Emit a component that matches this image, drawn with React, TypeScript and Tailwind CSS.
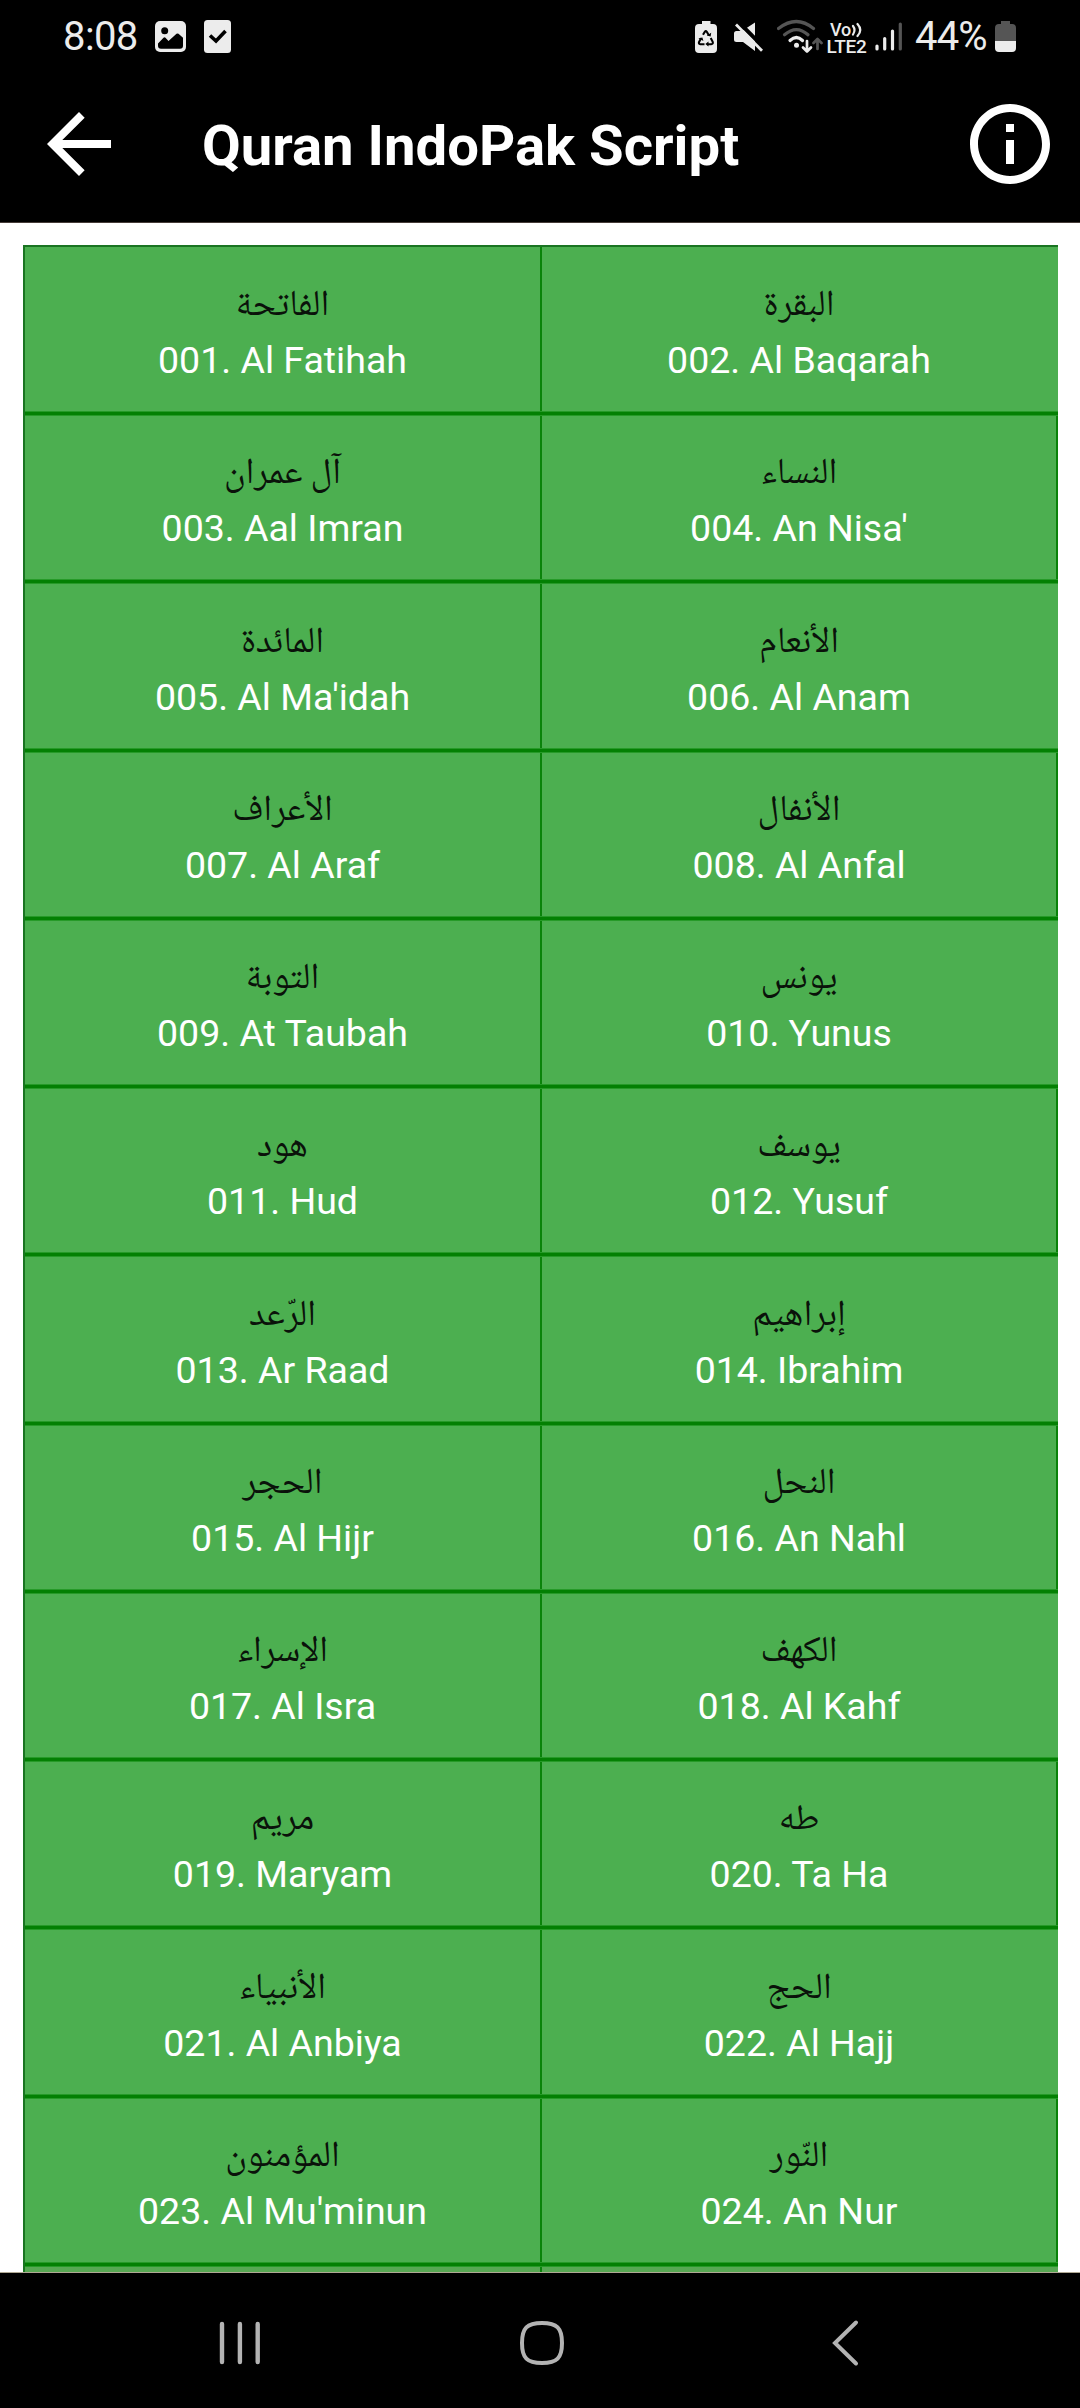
import React from "react";

const surahs: [string, string][] = [
  ["الفاتحة", "001. Al Fatihah"],
  ["البقرة", "002. Al Baqarah"],
  ["آل عمران", "003. Aal Imran"],
  ["النساء", "004. An Nisa'"],
  ["المائدة", "005. Al Ma'idah"],
  ["الأنعام", "006. Al Anam"],
  ["الأعراف", "007. Al Araf"],
  ["الأنفال", "008. Al Anfal"],
  ["التوبة", "009. At Taubah"],
  ["يونس", "010. Yunus"],
  ["هود", "011. Hud"],
  ["يوسف", "012. Yusuf"],
  ["الرّعد", "013. Ar Raad"],
  ["إبراهيم", "014. Ibrahim"],
  ["الحجر", "015. Al Hijr"],
  ["النحل", "016. An Nahl"],
  ["الإسراء", "017. Al Isra"],
  ["الكهف", "018. Al Kahf"],
  ["مريم", "019. Maryam"],
  ["طه", "020. Ta Ha"],
  ["الأنبياء", "021. Al Anbiya"],
  ["الحج", "022. Al Hajj"],
  ["المؤمنون", "023. Al Mu'minun"],
  ["النّور", "024. An Nur"],
];

const rows = Array.from({ length: 12 }, (_, i) => [surahs[2 * i], surahs[2 * i + 1]]);

function StatusBar() {
  return (
    <div className="flex h-[74px] w-full shrink-0 items-start pl-[63px] pr-[64px] text-[#ececec]">
      <span className="mt-[13px] w-[92px] whitespace-nowrap text-[40px] leading-[47px] tracking-[-0.6px]">8:08</span>
      <svg className="mt-5 h-[33px] w-[31px]" viewBox="0 0 31 33">
        <rect y="1" width="31" height="31" rx="5" fill="#ececec" />
        <circle cx="9.7" cy="10.7" r="3.5" fill="#000" />
        <path d="M3 23.5 8.5 17.8q1-1 2 0l3 3.2 8-7.2q1-.8 2 0l4.500 4v8q0 3-3 3H6q-3 0-3-3Z" fill="#000" />
      </svg>
      <svg className="ml-[18px] mt-5 h-[33px] w-[27px]" viewBox="0 0 27 33">
        <rect width="27" height="33" rx="3.500" fill="#ececec" />
        <path d="m6 15.500 6 5.500 9.500-10" fill="none" stroke="#000" strokeWidth="3.600" />
      </svg>
      <div className="ml-auto flex items-start">
        <svg className="mt-5 h-[34px] w-[22px]" viewBox="0 0 22 34">
          <path d="M7 1h8.500v3H18q4 0 4 4v21q0 4-4 4H4q-4 0-4-4V8q0-4 4-4h3Z" fill="#ececec" />
          <g fill="none" stroke="#000" strokeWidth="2.100">
            <path d="m8 14.800 1.800-3q1-1.300 2 0l2 3.400" />
            <path d="m15.700 18 2 3.800q.7 2.200-1.500 2.400h-3.700" />
            <path d="M9.500 24.200H5.300q-2-.2-1.200-2.200l2-3.800" />
          </g>
          <path d="m11.800 15.500 3.800 1 .6-3.800ZM13.500 21.500v5l-3.200-2.500ZM3.400 18.300l4-.9 1 3.600Z" fill="#000" />
        </svg>
        <svg className="ml-[17px] mt-5 h-[34px] w-[30px]" viewBox="0 0 30 34">
          <path d="M0 13.500q0-2.500 2.500-2.500H8L21 2.500v28.500L9 22H2.500Q0 22 0 19.500Z" fill="#ececec" />
          <path d="M3.500 1 31 28.700" stroke="#000" strokeWidth="4" />
          <path d="M2 4.500 28 30.700" stroke="#ececec" strokeWidth="2.800" />
        </svg>
        <svg className="ml-[13px] mt-4 h-[38px] w-[46px]" viewBox="0 0 46 38">
          <g fill="none" strokeLinecap="round" strokeWidth="3.200">
            <path d="M1.500 12.500Q19.500-1.500 36.500 12.500" stroke="#555" />
            <path d="M7.500 18.800Q19.500 8.500 31 18.800" stroke="#555" />
            <path d="M13 24.500Q19.500 18.500 25.500 24.500" stroke="#ececec" />
          </g>
          <circle cx="19.500" cy="29.300" r="2.500" fill="#ececec" />
          <path d="M30 25v10.500m-4-4 4 4 4-4" fill="none" stroke="#ececec" strokeWidth="2.700" strokeLinecap="round" strokeLinejoin="round" />
          <path d="M40.500 33V23m-4 4 4-4 4 4" fill="none" stroke="#555" strokeWidth="2.700" strokeLinecap="round" strokeLinejoin="round" />
        </svg>
        <div className="ml-[3px] mt-[21px] flex w-[41px] flex-col items-center font-medium">
          <span className="flex items-center">
            <span className="whitespace-nowrap text-[18px] leading-[17px] tracking-[-0.3px]">Vo</span>
            <svg className="h-[17px] w-[12px]" viewBox="0 0 12 17" fill="none" stroke="#ececec" strokeWidth="2.200" strokeLinecap="round">
              <path d="M2 5q3 4 0 8.500M6.500 3q5.500 6 0 12" />
            </svg>
          </span>
          <span className="whitespace-nowrap text-[19px] leading-[18px] tracking-[-0.3px]">LTE2</span>
        </div>
        <svg className="ml-2 mt-5 h-[34px] w-[28px]" viewBox="0 0 28 34" strokeWidth="3.200" strokeLinecap="round">
          <path d="M2 26v3M9.700 18.500V29M17.500 11V29" stroke="#ececec" />
          <path d="M25.300 4v25" stroke="#555" />
        </svg>
        <span className="ml-[12px] mt-[13px] w-[72px] whitespace-nowrap text-[40px] leading-[47px] tracking-[-0.8px]">44%</span>
        <svg className="ml-2 mt-5 h-[34px] w-[21px]" viewBox="0 0 21 34">
          <path d="M6 1h9v3h2q4 0 4 4v13H0V8q0-4 4-4h2Z" fill="#555" />
          <path d="M0 21h21v7q0 4-4 4H4q-4 0-4-4Z" fill="#ececec" />
        </svg>
      </div>
    </div>
  );
}

function AppBar() {
  return (
    <div className="flex w-full flex-1 items-center pl-[31px] pr-[22px] pb-[9px]">
      <svg className="h-24 w-24" viewBox="0 0 24 24" fill="#fff">
        <path d="M20 11H7.830l5.590-5.590L12 4l-8 8 8 8 1.410-1.410L7.830 13H20v-2z" />
      </svg>
      <h1 className="ml-[75px] whitespace-nowrap pt-1 text-[56.25px] font-bold leading-[66px] text-white">Quran IndoPak Script</h1>
      <svg className="ml-auto h-24 w-24" viewBox="0 0 24 24" fill="#fff">
        <path d="M11 7h2v2h-2zm0 4h2v6h-2zm1-9C6.480 2 2 6.480 2 12s4.480 10 10 10 10-4.480 10-10S17.520 2 12 2zm0 18c-4.410 0-8-3.590-8-8s3.590-8 8-8 8 3.590 8 8-3.590 8-8 8z" />
      </svg>
    </div>
  );
}

function Cell({ arabic, name, right }: { arabic: string; name: string; right?: boolean }) {
  return (
    <div
      className={
        "flex flex-col items-center justify-end pb-[27px] " +
        (right ? "flex-1" : "w-[517px] shrink-0 border-r-2 border-[#0a830a]")
      }
    >
      <span dir="rtl" lang="ar" className="whitespace-nowrap font-['Noto_Naskh_Arabic','Noto_Sans_Arabic','DejaVu_Sans',sans-serif] text-[36.6px] leading-[58px] text-[#0a120a]">{arabic}</span>
      <span className="whitespace-nowrap text-[37.5px] leading-[48px] text-white">{name}</span>
    </div>
  );
}

function RowLine() {
  return <div className="h-[5px] shrink-0 border-y border-[#269a28] bg-[#038003]" />;
}

function NavBar() {
  return (
    <div className="flex h-[135px] w-full shrink-0 items-start bg-black pl-[218px]">
      <svg className="mt-[47px] h-[46px] w-[44px]" viewBox="0 0 44 46" stroke="#b3b3b3" strokeWidth="4.400" strokeLinecap="round">
        <path d="M4 4v38M21.900 4v38M39.700 4v38" />
      </svg>
      <svg className="ml-[257px] mt-[47px] h-[46px] w-[46px]" viewBox="0 0 46 46" fill="none" stroke="#b3b3b3" strokeWidth="4">
        <path d="M23 3C38 3 43 8 43 23S38 43 23 43 3 38 3 23 8 3 23 3Z" />
      </svg>
      <svg className="ml-[266px] mt-[45px] h-[50px] w-[28px]" viewBox="0 0 28 50" fill="none" stroke="#b3b3b3" strokeWidth="4" strokeLinecap="round">
        <path d="M25 4.500 4 25l21 20.500" />
      </svg>
    </div>
  );
}

export default function App() {
  return (
    <div className="flex h-[2408px] w-[1080px] flex-col overflow-hidden bg-white font-[Roboto,sans-serif]">
      <header className="flex h-[223px] shrink-0 flex-col border-b border-[#463c38] bg-black">
        <StatusBar />
        <AppBar />
      </header>
      <main className="flex min-h-0 flex-1 flex-col overflow-hidden pl-[23px] pr-[22px] pt-[22px]">
        <div className="flex flex-col border-l-2 border-t-2 border-[#1a7422] bg-[#4caf50]">
          {rows.map(([a, b], i) => (
            <React.Fragment key={i}>
              <div className={"flex shrink-0 " + (i === 0 ? "h-[164px]" : "h-[163.270px]") + (i % 2 ? " border-r-2 border-[#0a830a]" : " pr-[2px]")}>
                <Cell arabic={a[0]} name={a[1]} />
                <Cell arabic={b[0]} name={b[1]} right />
              </div>
              <RowLine />
            </React.Fragment>
          ))}
          <div className="flex h-10 shrink-0">
            <div className="w-[517px] border-r-2 border-[#0a830a] bg-[#57a853]" />
            <div className="flex-1 bg-[#57a853]" />
          </div>
        </div>
      </main>
      <div className="h-px shrink-0 bg-[#b0a894]" />
      <NavBar />
    </div>
  );
}
